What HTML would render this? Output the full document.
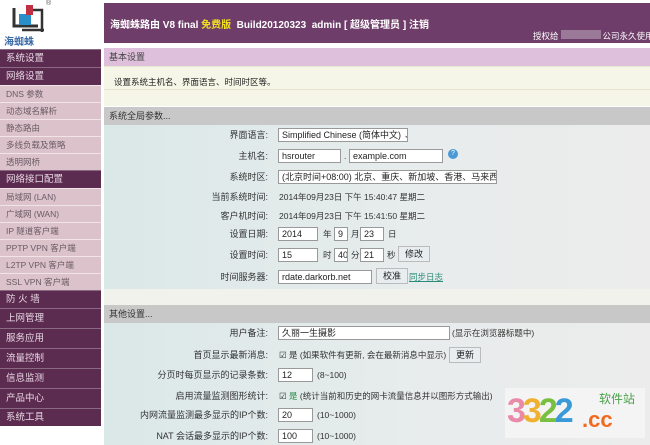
<!DOCTYPE html>
<html><head><meta charset="utf-8"><style>
*{margin:0;padding:0;box-sizing:border-box}
body{width:650px;height:445px;overflow:hidden;background:#fff;font-family:"Liberation Sans","Noto Sans CJK SC",sans-serif;font-size:9px;color:#222;position:relative}
.a{position:absolute}
.side div{position:absolute;left:0;width:101px;padding-left:6px;white-space:nowrap}
.d{background:#5c2b50;color:#e8d8e4;font-size:9.5px;border-top:1px solid #8a6a82}
.l{background:#dcc3cb;color:#6a5a64;font-size:8.5px;border-top:1px solid #f0e4e8}
.lab{position:absolute;right:382px;text-align:right;white-space:nowrap;color:#333;line-height:12px}
.inp{position:absolute;border:1px solid #999;background:#fff;height:14px;padding:0 3px;line-height:12px;font-size:9px;color:#222;white-space:nowrap;overflow:hidden}
.t{position:absolute;white-space:nowrap;font-size:8.5px;color:#333;line-height:12px}
.btn{position:absolute;border:1px solid #bbb;background:#e8eef0;height:16px;line-height:14px;padding:0 6px;font-size:9px}
</style></head><body>
<!-- logo -->
<svg class="a" style="left:4px;top:2px" width="50" height="44">
<path d="M10 6v18h24" stroke="#333" stroke-width="3" fill="none"/>
<rect x="15" y="12" width="12" height="11" fill="#2a8fc8"/>
<rect x="22" y="3" width="7" height="10" fill="#c03040"/>
<path d="M29 8h9v22M18 28h22" stroke="#333" stroke-width="2.5" fill="none"/>
<text x="0" y="43" font-size="10" font-weight="bold" fill="#3a6aa8" font-family="Noto Sans CJK SC">海蜘蛛</text>
</svg>
<div class="a" style="left:46px;top:0;font-size:7px;color:#555">®</div>
<!-- header -->
<div class="a" style="left:104px;top:3px;width:546px;height:40px;background:#6f3d6a"></div>
<div class="a" style="left:110px;top:16px;color:#fff;font-weight:bold;font-size:10px;white-space:nowrap">海蜘蛛路由 V8 final <span style="color:#f0e020">免费版</span> &nbsp;Build20120323 &nbsp;admin [ 超级管理员 ] 注销</div>
<div class="a" style="left:533px;top:30px;color:#fff;font-size:8.5px;white-space:nowrap">授权给<span style="display:inline-block;width:40px;height:9px;background:#9a7a98;margin:0 2px"></span>公司永久使用</div>
<!-- sidebar -->
<div class="side">
<div class="d" style="top:49px;height:18px;line-height:17px">系统设置</div>
<div class="d" style="top:67px;height:18px;line-height:17px">网络设置</div>
<div class="l" style="top:85px;height:17px;line-height:16px">DNS 参数</div>
<div class="l" style="top:102px;height:17px;line-height:16px">动态域名解析</div>
<div class="l" style="top:119px;height:17px;line-height:16px">静态路由</div>
<div class="l" style="top:136px;height:17px;line-height:16px">多线负载及策略</div>
<div class="l" style="top:153px;height:17px;line-height:16px">透明网桥</div>
<div class="d" style="top:170px;height:18px;line-height:17px">网络接口配置</div>
<div class="l" style="top:188px;height:17px;line-height:16px">局域网 (LAN)</div>
<div class="l" style="top:205px;height:17px;line-height:16px">广域网 (WAN)</div>
<div class="l" style="top:222px;height:17px;line-height:16px">IP 隧道客户端</div>
<div class="l" style="top:239px;height:17px;line-height:16px">PPTP VPN 客户端</div>
<div class="l" style="top:256px;height:17px;line-height:16px">L2TP VPN 客户端</div>
<div class="l" style="top:273px;height:17px;line-height:16px">SSL VPN 客户端</div>
<div class="d" style="top:290px;height:18px;line-height:17px">防 火 墙</div>
<div class="d" style="top:308px;height:20px;line-height:19px">上网管理</div>
<div class="d" style="top:328px;height:20px;line-height:19px">服务应用</div>
<div class="d" style="top:348px;height:20px;line-height:19px">流量控制</div>
<div class="d" style="top:368px;height:20px;line-height:19px">信息监测</div>
<div class="d" style="top:388px;height:20px;line-height:19px">产品中心</div>
<div class="d" style="top:408px;height:18px;line-height:17px">系统工具</div>
</div>
<!-- main -->
<div class="a" style="left:104px;top:48px;width:546px;height:18px;background:#dfc0dc;padding-left:5px;line-height:18px;color:#444">基本设置</div>
<div class="a" style="left:104px;top:66px;width:546px;height:40px;background:#f6f6e8;border-top:1px solid #e8e8d0"></div>
<div class="a" style="left:104px;top:89px;width:546px;border-top:1px solid #e6e6d0"></div>
<div class="a" style="left:114px;top:76px;font-size:8.5px">设置系统主机名、界面语言、时间时区等。</div>
<div class="a" style="left:104px;top:107px;width:546px;height:18px;background:#c8c8c8;padding-left:5px;line-height:18px;color:#333">系统全局参数...</div>
<div class="a" style="left:104px;top:125px;width:546px;height:164px;background:linear-gradient(90deg,#dbe8e8,#e8ecec 60%,#ececec)"></div>
<div class="a" style="left:104px;top:289px;width:546px;height:16px;background:#f2f2ec"></div>
<div class="a" style="left:104px;top:305px;width:546px;height:18px;background:#c8c8c8;padding-left:5px;line-height:18px;color:#333">其他设置...</div>
<div class="a" style="left:104px;top:323px;width:546px;height:122px;background:linear-gradient(90deg,#dbe8e8,#e8ecec 60%,#ececec)"></div>

<div class="lab" style="top:129px">界面语言:</div><div class="inp" style="left:278px;top:128px;width:130px">Simplified Chinese (简体中文) ⌄</div>
<div class="lab" style="top:150px">主机名:</div><div class="inp" style="left:278px;top:149px;width:63px">hsrouter</div>
<div class="t" style="left:344px;top:150px">.</div><div class="inp" style="left:349px;top:149px;width:94px">example.com</div>
<div class="a" style="left:448px;top:149px;width:10px;height:10px;border-radius:50%;background:#4a9ad8;color:#fff;font-size:7px;text-align:center;line-height:10px">?</div>
<div class="lab" style="top:171px">系统时区:</div><div class="inp" style="left:278px;top:170px;width:219px">(北京时间+08:00) 北京、重庆、新加坡、香港、马来西亚 ⌄</div>
<div class="lab" style="top:191px">当前系统时间:</div><div class="t" style="left:279px;top:191px">2014年09月23日 下午 15:40:47 星期二</div>
<div class="lab" style="top:210px">客户机时间:</div><div class="t" style="left:279px;top:210px">2014年09月23日 下午 15:41:50 星期二</div>
<div class="lab" style="top:228px">设置日期:</div>
<div class="inp" style="left:278px;top:227px;width:40px">2014</div><div class="t" style="left:323px;top:228px">年</div>
<div class="inp" style="left:334px;top:227px;width:14px">9</div><div class="t" style="left:351px;top:228px">月</div>
<div class="inp" style="left:360px;top:227px;width:24px">23</div><div class="t" style="left:388px;top:228px">日</div>
<div class="lab" style="top:249px">设置时间:</div>
<div class="inp" style="left:278px;top:248px;width:40px">15</div><div class="t" style="left:323px;top:249px">时</div>
<div class="inp" style="left:334px;top:248px;width:14px">40</div><div class="t" style="left:351px;top:249px">分</div>
<div class="inp" style="left:360px;top:248px;width:24px">21</div><div class="t" style="left:387px;top:249px">秒</div>
<div class="btn" style="left:398px;top:246px">修改</div>
<div class="lab" style="top:271px">时间服务器:</div><div class="inp" style="left:278px;top:270px;width:94px">rdate.darkorb.net</div>
<div class="btn" style="left:376px;top:268px">校准</div>
<div class="t" style="left:409px;top:271px;color:#2a8a7a;text-decoration:underline">同步日志</div>

<div class="lab" style="top:327px">用户备注:</div><div class="inp" style="left:278px;top:326px;width:172px">久丽一生摄影</div>
<div class="t" style="left:452px;top:327px">(显示在浏览器标题中)</div>
<div class="lab" style="top:349px">首页显示最新消息:</div>
<div class="t" style="left:279px;top:349px">☑ 是 (如果软件有更新, 会在最新消息中显示)</div>
<div class="btn" style="left:449px;top:347px">更新</div>
<div class="lab" style="top:369px">分页时每页显示的记录条数:</div><div class="inp" style="left:278px;top:368px;width:35px">12</div><div class="t" style="left:317px;top:369px">(8~100)</div>
<div class="lab" style="top:390px">启用流量监测图形统计:</div>
<div class="t" style="left:279px;top:390px">☑ <span style="color:#2a8a4a">是</span> (统计当前和历史的网卡流量信息并以图形方式输出)</div>
<div class="lab" style="top:409px">内网流量监测最多显示的IP个数:</div><div class="inp" style="left:278px;top:408px;width:35px">20</div><div class="t" style="left:317px;top:409px">(10~1000)</div>
<div class="lab" style="top:430px">NAT 会话最多显示的IP个数:</div><div class="inp" style="left:278px;top:429px;width:35px">100</div><div class="t" style="left:317px;top:430px">(10~1000)</div>

<!-- watermark -->
<div class="a" style="left:505px;top:388px;width:140px;height:50px;background:#f4f4f4"></div>
<div class="a" style="left:507px;top:392px;font-size:34px;font-weight:bold;letter-spacing:-3px;white-space:nowrap"><span style="color:#e88aa8">3</span><span style="color:#f0b030">3</span><span style="color:#7ac040">2</span><span style="color:#3a9ad8">2</span></div>
<div class="a" style="left:582px;top:407px;font-size:22px;font-weight:bold;color:#f06a20">.cc</div>
<div class="a" style="left:599px;top:390px;font-size:12px;color:#4aa04a">软件站</div>
</body></html>
